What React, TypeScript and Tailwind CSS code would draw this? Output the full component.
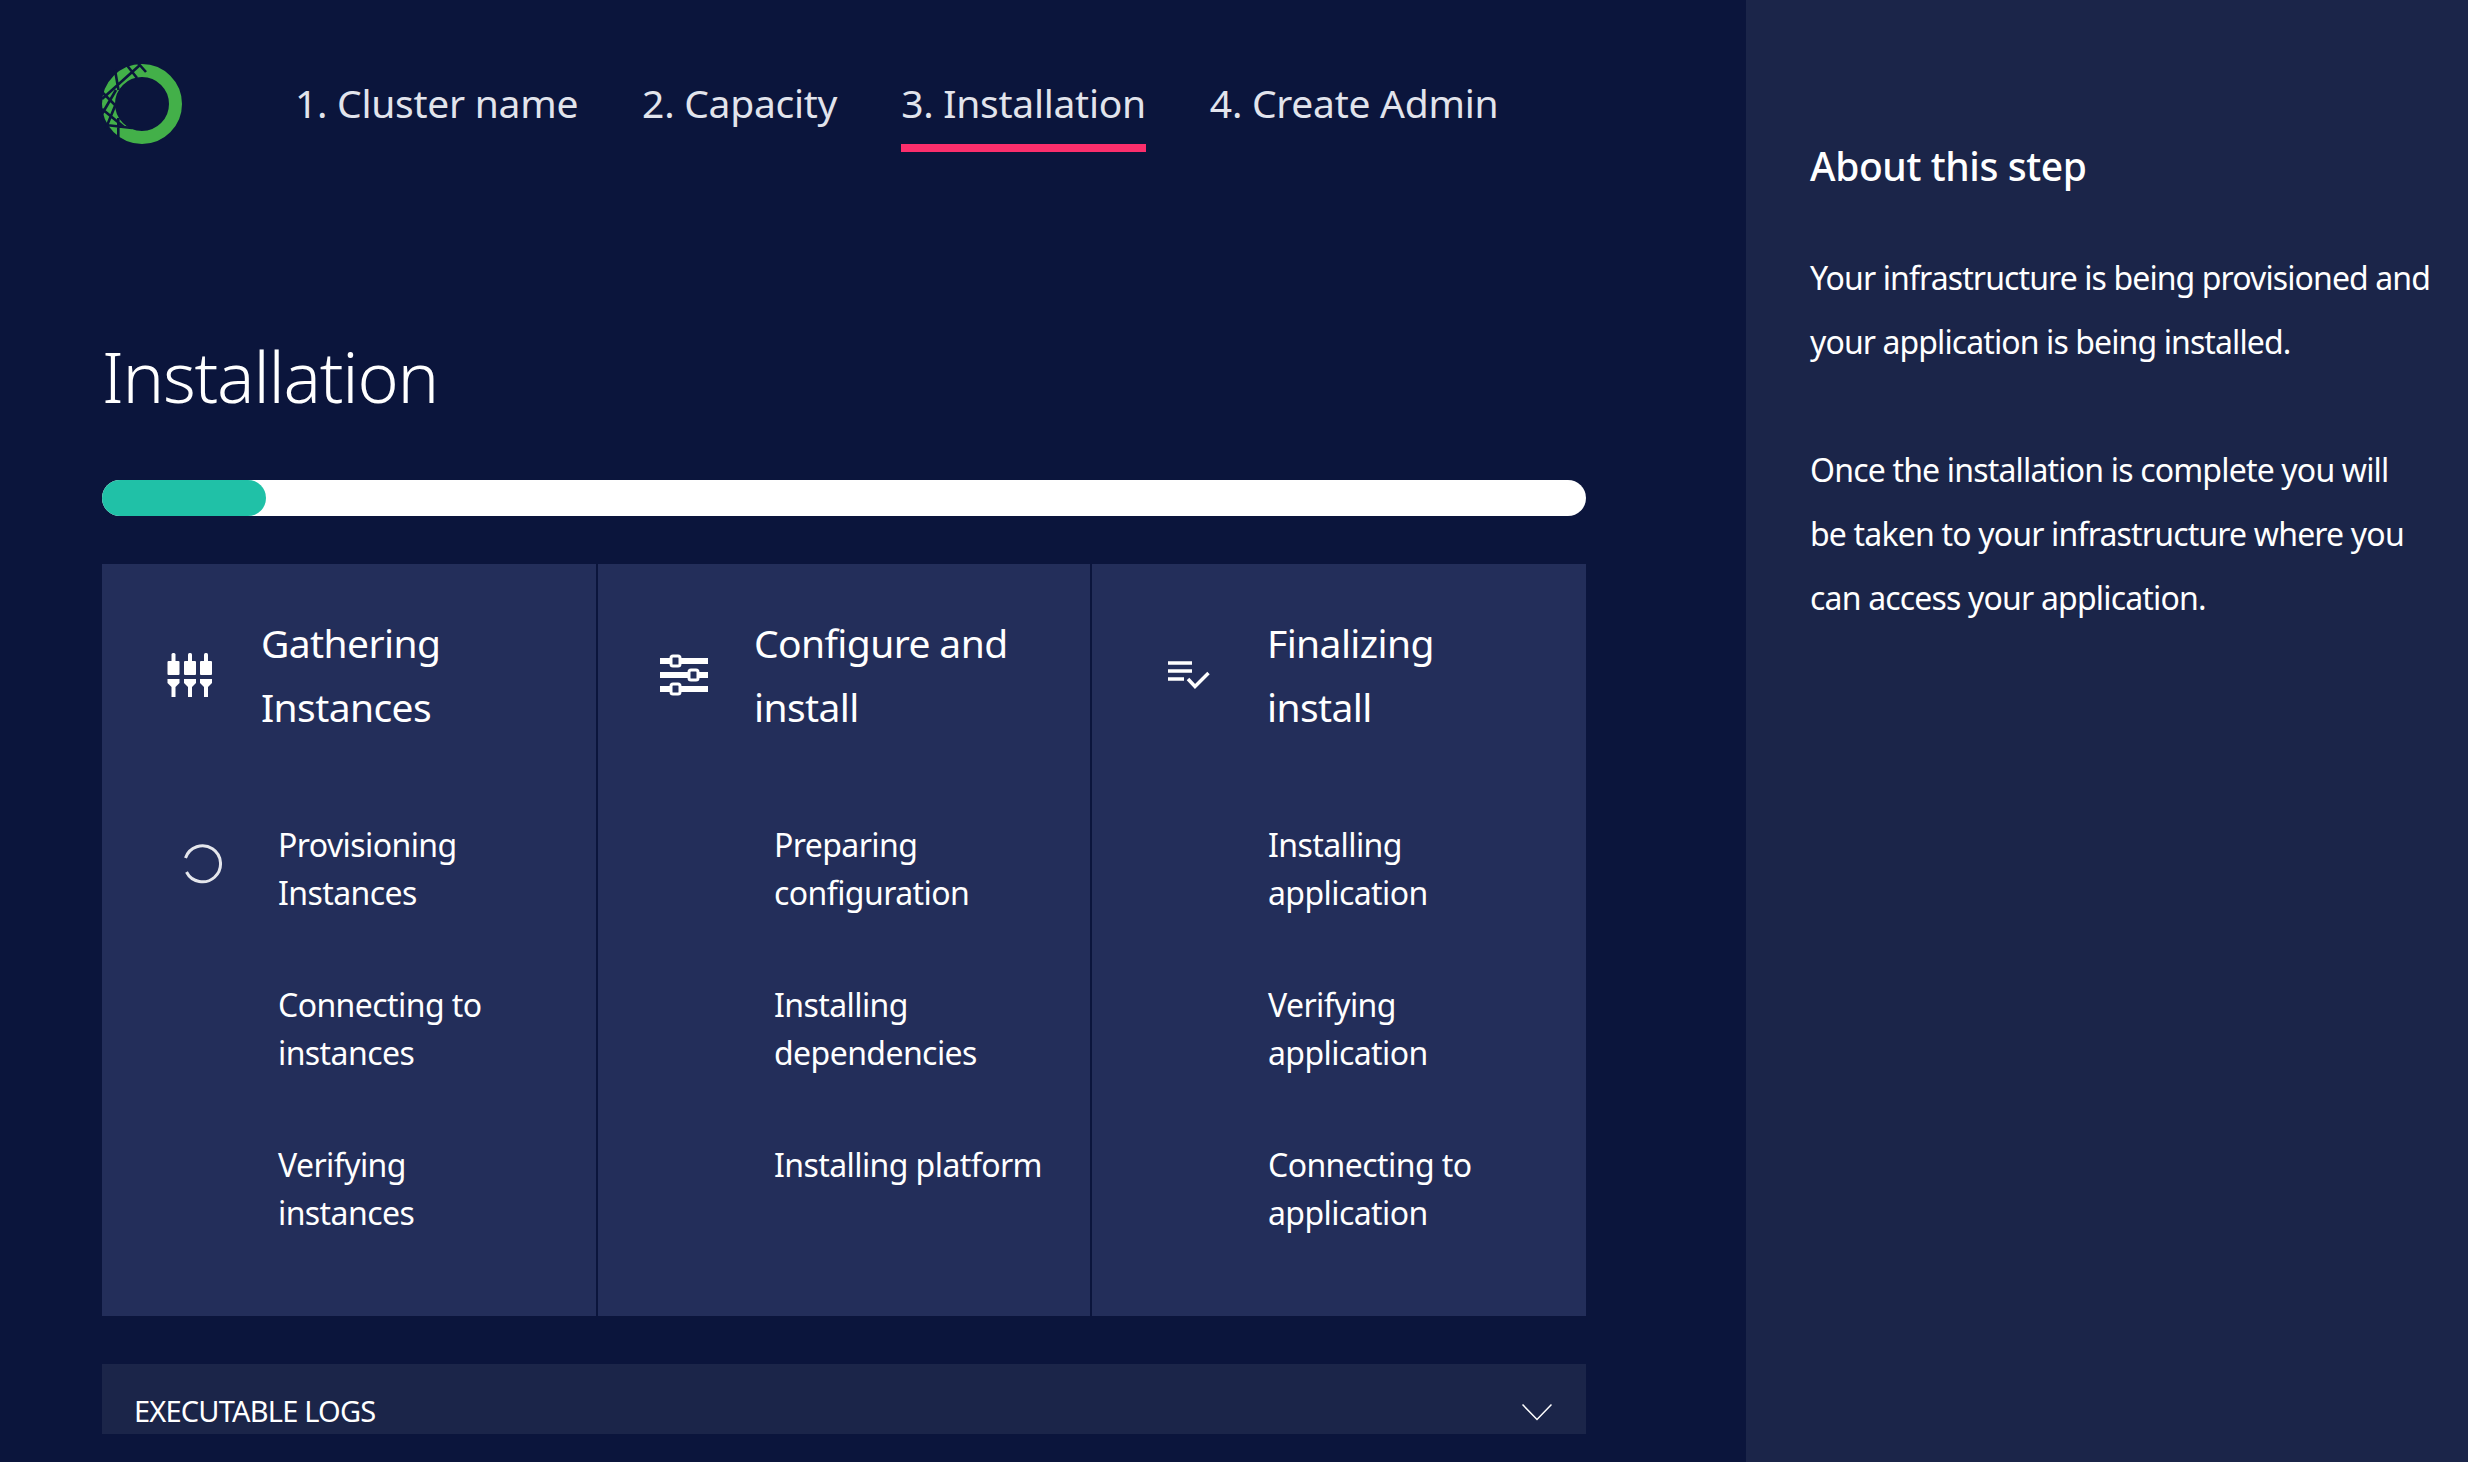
const font = "font-['Noto_Sans','Liberation_Sans',sans-serif]";

const columns = [
  {
    title: ['Gathering', 'Instances'],
    icon: 'plug',
    items: [['Provisioning', 'Instances'], ['Connecting to', 'instances'], ['Verifying', 'instances']],
    iconBox: 'w-[159px] pl-[16px]',
  },
  {
    title: ['Configure and', 'install'],
    icon: 'sliders',
    items: [['Preparing', 'configuration'], ['Installing', 'dependencies'], ['Installing platform']],
    iconBox: 'w-[156px] pl-[15px]',
  },
  {
    title: ['Finalizing', 'install'],
    icon: 'check',
    items: [['Installing', 'application'], ['Verifying', 'application'], ['Connecting to', 'application']],
    iconBox: 'w-[175px] pl-[18px]',
  },
];

function Logo() {
  return (
    <svg width="84" height="84" viewBox="0 0 84 84">
      <circle cx="42" cy="42" r="33.5" fill="none" stroke="#43b049" strokeWidth="13" />
      <g stroke="#0b153c" strokeWidth="2.6" fill="none">
        <path d="M37 0 L46 10 M26.7 3 L37 16 M40 3 L2 37 M15 8 L18.5 28 M2 30 L17 45 M16 28 L2 52 M2 47 L24 65 M15 44 L6 66 M18.3 56 L18.3 80 M6 63 L32 66" />
      </g>
    </svg>
  );
}

function PlugIcon() {
  return (
    <svg width="46" height="44" viewBox="0 0 46 44" fill="#fff">
      {[6.5, 23, 39].map((x) => (
        <g key={x}>
          <rect x={x - 2} y="0" width="4" height="10" rx="1.5" />
          <rect x={x - 6} y="8" width="12" height="14" rx="1" />
          <path d={`M${x - 6} 26 H${x + 6} V30 L${x + 2} 34 V44 H${x - 2} V34 L${x - 6} 30 Z`} />
        </g>
      ))}
    </svg>
  );
}

function SlidersIcon() {
  return (
    <svg width="48" height="42" viewBox="0 0 48 42" fill="none">
      <path d="M0 7 H48 M0 21 H48 M0 35 H48" stroke="#fff" strokeWidth="6" />
      <rect x="11" y="2" width="9" height="10" rx="2" fill="#232e5a" stroke="#fff" strokeWidth="3" />
      <rect x="29" y="16" width="9" height="10" rx="2" fill="#232e5a" stroke="#fff" strokeWidth="3" />
      <rect x="11" y="30" width="9" height="10" rx="2" fill="#232e5a" stroke="#fff" strokeWidth="3" />
    </svg>
  );
}

function ListCheckIcon() {
  return (
    <svg width="42" height="28" viewBox="0 0 42 28" fill="none" stroke="#fff">
      <path d="M0 2 H24 M0 10 H24 M0 18 H16" strokeWidth="3.5" />
      <path d="M20 18 L27 25.5 L40.5 12" strokeWidth="3.5" />
    </svg>
  );
}

function Spinner() {
  return (
    <svg width="42" height="42" viewBox="0 0 42 42" fill="none">
      <path d="M3.5 15 A18 18 0 1 1 4.5 29" stroke="#e4e6ec" strokeWidth="3" />
    </svg>
  );
}

function Column({ col, first }: { col: (typeof columns)[number]; first: boolean }) {
  return (
    <div className="bg-[#232e5a] pt-[47px] h-[752px]">
      <div className="flex items-center">
        <div className={`${col.iconBox} flex justify-center shrink-0`}>
          {col.icon === 'plug' && <PlugIcon />}
          {col.icon === 'sliders' && <SlidersIcon />}
          {col.icon === 'check' && <ListCheckIcon />}
        </div>
        <h2 className="text-[39px] font-[450] tracking-[-0.6px] leading-[64px] text-white">
          {col.title.map((t) => <div key={t}>{t}</div>)}
        </h2>
      </div>
      <div className="mt-[82px] flex flex-col gap-[64px]">
        {col.items.map((item, i) => (
          <div key={i} className="relative pl-[176px] text-[32px] tracking-[-0.58px] leading-[48px] text-white min-h-[96px]">
            {first && i === 0 && (
              <div className="absolute left-[80px] top-[22px]"><Spinner /></div>
            )}
            {item.map((l) => <div key={l}>{l}</div>)}
          </div>
        ))}
      </div>
    </div>
  );
}

export default function App() {
  const tabs = ['1. Cluster name', '2. Capacity', '3. Installation', '4. Create Admin'];
  return (
    <div className={`${font} flex h-[1462px] w-[2468px] overflow-hidden bg-[#0b153c] text-white`}>
      <main className="w-[1746px] shrink-0 pl-[102px]">
        <nav className="flex h-[152px] items-start">
          <div className="mt-[62px] -ml-[2px] w-[195px] shrink-0"><Logo /></div>
          <div className="flex gap-[64px] h-[152px]">
            {tabs.map((t, i) => (
              <div key={t} className={`pt-[75px] h-[152px] text-[39px] tracking-[-0.27px] leading-[56px] text-[#e2e4ec] ${i === 2 ? 'border-b-[8px] border-[#fb2e6c]' : ''}`}>{t}</div>
            ))}
          </div>
        </nav>
        <h1 className="mt-[180px] text-[70px] tracking-[-1.25px] leading-[88px] h-[88px] font-light">Installation</h1>
        <div className="mt-[60px] h-[36px] w-[1484px] rounded-full bg-white">
          <div className="h-[36px] w-[164px] rounded-full bg-[#20c1a7]" />
        </div>
        <div className="mt-[48px] grid w-[1484px] grid-cols-[494px_492px_494px] gap-[2px]">
          {columns.map((c, i) => <Column key={c.title[0]} col={c} first={i === 0} />)}
        </div>
        <div className="mt-[48px] flex h-[70px] w-[1484px] items-end justify-between bg-[#1b2549] pb-[3px] pl-[32px] pr-[34px]">
          <span className="text-[29px] tracking-[-0.8px] leading-[40px]">EXECUTABLE LOGS</span>
          <svg width="30" height="17" viewBox="0 0 30 17" fill="none" className="mb-[10px]">
            <path d="M0.5 0.5 L15 15.5 L29.5 0.5" stroke="#fff" strokeWidth="1.5" />
          </svg>
        </div>
      </main>
      <aside className="flex-1 bg-[#1b2549] pl-[64px] pt-[136px]">
        <h2 className="text-[39px] tracking-[-0.4px] font-medium leading-[60px]">About this step</h2>
        <p className="mt-[50px] text-[32px] tracking-[-0.9px] leading-[64px] whitespace-nowrap">
          Your infrastructure is being provisioned and<br />your application is being installed.
        </p>
        <p className="mt-[64px] text-[32px] tracking-[-0.82px] leading-[64px] whitespace-nowrap">
          Once the installation is complete you will<br />be taken to your infrastructure where you<br />can access your application.
        </p>
      </aside>
    </div>
  );
}
